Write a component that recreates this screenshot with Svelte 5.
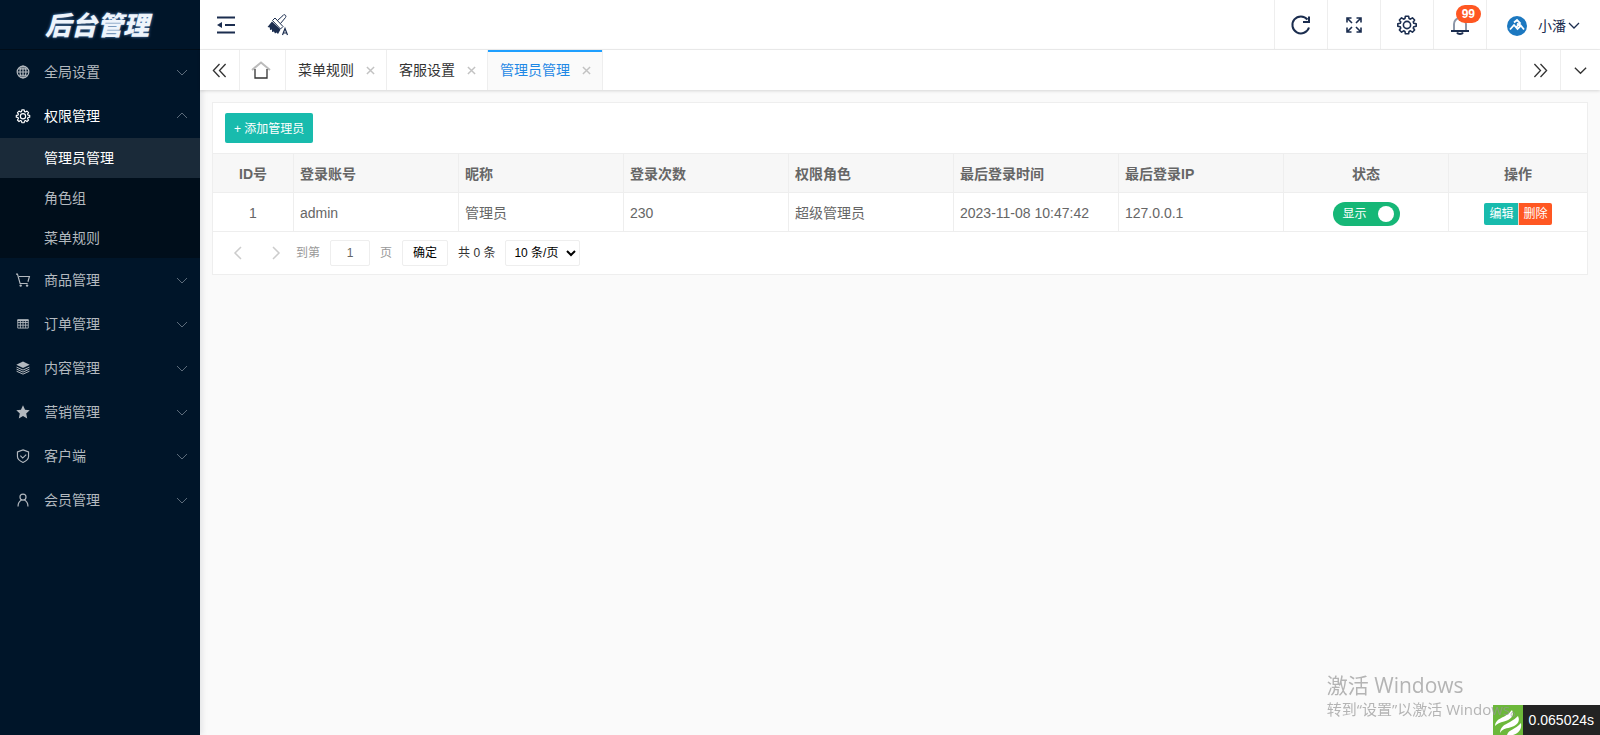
<script lang="ts">
  type MenuItem = { title: string; icon: string; open?: boolean; children?: string[] };

  const menu: MenuItem[] = [
    { title: '全局设置', icon: 'globe' },
    { title: '权限管理', icon: 'gear', open: true, children: ['管理员管理', '角色组', '菜单规则'] },
    { title: '商品管理', icon: 'cart' },
    { title: '订单管理', icon: 'table' },
    { title: '内容管理', icon: 'layers' },
    { title: '营销管理', icon: 'star' },
    { title: '客户端', icon: 'shield' },
    { title: '会员管理', icon: 'user' },
  ];

  const tabs = ['菜单规则', '客服设置', '管理员管理'];

  const admins = $state([
    { id: 1, account: 'admin', nickname: '管理员', count: 230, role: '超级管理员', time: '2023-11-08 10:47:42', ip: '127.0.0.1', show: true },
  ]);

  let activeMenu = $state('管理员管理');
  let activeTab = $state('管理员管理');
  let page = $state(1);
</script>

{#snippet gear()}
  <path d="M10 1.5h4l.6 3 1.6.7 2.6-1.7 2.7 2.7-1.7 2.6.7 1.6 3 .6v3l-3 .6-.7 1.6 1.7 2.6-2.7 2.7-2.6-1.7-1.6.7-.6 3h-4l-.6-3-1.6-.7-2.6 1.7-2.7-2.7 1.7-2.6-.7-1.6-3-.6v-3l3-.6.7-1.6-1.7-2.6 2.7-2.7 2.6 1.7 1.6-.7z" stroke-linejoin="round" />
  <circle cx="12" cy="12.5" r="4.5" />
{/snippet}

<div class="layout">
  <aside class="side">
    <h1 class="side__logo">后台管理</h1>
    <nav>
      {#each menu as item}
        <button class="menu" class:open={item.open}>
          <svg class="menu__icon" viewBox="0 0 24 24" aria-hidden="true">
            {#if item.icon === 'globe'}
              <circle cx="12" cy="12" r="10" /><ellipse cx="12" cy="12" rx="5" ry="10" />
              <path d="M12 2v20M2 12h20M4 6.5h16M4 17.5h16" />
            {:else if item.icon === 'gear'}
              {@render gear()}
            {:else if item.icon === 'cart'}
              <path d="M0 2h2.5l4.500 16h13M5 6h18l-2.500 9" />
              <circle class="solid" cx="8" cy="21.5" r="2" /><circle class="solid" cx="19" cy="21.5" r="2" />
            {:else if item.icon === 'table'}
              <path d="M3 5h18v14H3zM3 9.5h18M3 14h18M7.5 5v14M12 5v14M16.5 5v14" stroke-width="1.5" />
              <path class="solid" d="M2.500 4h19v3h-19z" />
            {:else if item.icon === 'layers'}
              <path class="solid" d="M12 1l11.5 5.5L12 12 .5 6.5z" />
              <path d="M1 10.5l11 5 11-5M1 14l11 5 11-5M1 17.5l11 5 11-5" stroke-width="1.7" />
            {:else if item.icon === 'star'}
              <path class="solid" d="M12 .5l3.500 7.500 8 1-6 5.500 1.700 8.500L12 19l-7.200 4 1.700-8.500-6-5.500 8-1z" />
            {:else if item.icon === 'shield'}
              <path d="M12 1.5l9.500 3.500v8c0 5-4.500 8-9.500 10-5-2-9.500-5-9.500-10V5zM7.500 11.500l4 4 6-6" />
            {:else}
              <circle cx="12" cy="7" r="5.2" /><path d="M3.5 23c0-6 3-9.500 6-11M20.500 23c0-6-3-9.500-6-11" />
            {/if}
          </svg>
          <span>{item.title}</span>
          <svg class="menu__arrow" viewBox="0 0 12 12" aria-hidden="true"><path d="M1 4l5 5 5-5" /></svg>
        </button>
        {#if item.open && item.children}
          <div class="sub">
            {#each item.children as child}
              <button class="sub__item" class:active={activeMenu === child} onclick={() => (activeMenu = child)}>{child}</button>
            {/each}
          </div>
        {/if}
      {/each}
    </nav>
  </aside>

  <div class="body">
    <header class="header">
      <button class="header__tool" aria-label="收起菜单">
        <svg class="fold" viewBox="0 0 20 18"><path d="M1 1.500h18M9 9h10M1 16.500h18" /><path class="solid" d="M1 9l5-3v6z" /></svg>
      </button>
      <button class="header__tool" aria-label="主题">
        <svg class="brush" viewBox="0 0 22 22">
          <path class="solid" d="M5 7.500l8.500 8-2.500 4.500-1.500-1.500-1.500 1-1-2-2 .5V15.500l-2 .5-.2-2.500-2.300-.5z" />
          <path d="M5.500 6.500L8 4l8 8.500-2.500 2.500zM10.500 6.500L16 1.500c1-2 4 0 2.500 2l-5 6" />
          <path d="M15.500 21l2.500-6.500 2.500 6.500M16.300 19h3.400" stroke-width="1.2" />
        </svg>
      </button>
      <div class="header__right">
        <button class="cell" aria-label="刷新">
          <svg viewBox="0 0 20 20"><path d="M18 12.500A8.500 8.500 0 1 1 16.500 4.500M18 1.500V7h-6" /></svg>
        </button>
        <button class="cell" aria-label="全屏">
          <svg class="full" viewBox="0 0 16 16">
            <path d="M1 5.500V1h4.500M1 1l5 5M10.500 1H15v4.500M15 1l-5 5M1 10.500V15h4.500M1 15l5-5M15 10.500V15h-4.500M15 15l-5-5" />
          </svg>
        </button>
        <button class="cell" aria-label="设置">
          <svg viewBox="0 0 24 25">{@render gear()}</svg>
        </button>
        <button class="cell" aria-label="消息">
          <svg viewBox="0 0 20 20"><path class="bell__dome" d="M4 15V9a6 6 0 0 1 12 0v6" /><path d="M1 16h18M7 17.500c1 2 5 2 6 0" /></svg>
          <span class="badge">99</span>
        </button>
        <button class="user">
          <svg class="user__avatar" viewBox="0 0 20 20">
            <circle cx="10" cy="10" r="10" fill="#1c78c0" />
            <path d="M3 13.500l4-4.500 3.500 4 3-3-3.500-2.500M7 6.500l3-2.500 3 3-3.500 4M13 8.500l4 5" fill="none" stroke="#fff" stroke-width="1.800" />
          </svg>
          <span>小潘</span>
          <svg class="user__arrow" viewBox="0 0 12 12"><path d="M1 3l5 5 5-5" /></svg>
        </button>
      </div>
    </header>

    <div class="tabs">
      <button class="tabs__ctl" aria-label="向左">
        <svg viewBox="0 0 16 16"><path d="M8 1L1.500 8 8 15M14.500 1L8 8l6.500 7" /></svg>
      </button>
      <button class="tabs__home" aria-label="首页">
        <svg viewBox="0 0 20 20"><path class="roof" d="M1 10L10 2.500l9 7.500" /><path d="M4 9v9h12V9" /></svg>
      </button>
      {#each tabs as tab}
        <div class="tab" class:active={activeTab === tab}>
          <button class="tab__name" onclick={() => (activeTab = tab)}>{tab}</button>
          <button class="tab__close" aria-label="关闭{tab}">
            <svg viewBox="0 0 10 10"><path d="M1 1l8 8M9 1L1 9" /></svg>
          </button>
        </div>
      {/each}
      <div class="tabs__end">
        <button class="tabs__ctl" aria-label="向右">
          <svg viewBox="0 0 16 16"><path d="M1.500 1L8 8l-6.500 7M8 1l6.500 7L8 15" /></svg>
        </button>
        <button class="tabs__ctl" aria-label="更多">
          <svg viewBox="0 0 16 16"><path d="M2 5l6 6 6-6" /></svg>
        </button>
      </div>
    </div>

    <main class="main">
      <section class="card">
        <div class="card__bar">
          <button class="add">+ 添加管理员</button>
        </div>
        <table class="grid">
          <colgroup>
            <col class="c-id" /><col class="c-std" /><col class="c-std" /><col class="c-std" /><col class="c-std" />
            <col class="c-std" /><col class="c-std" /><col class="c-std" /><col />
          </colgroup>
          <thead>
            <tr>
              <th class="mid">ID号</th>
              <th>登录账号</th>
              <th>昵称</th>
              <th>登录次数</th>
              <th>权限角色</th>
              <th>最后登录时间</th>
              <th>最后登录IP</th>
              <th class="mid">状态</th>
              <th class="mid">操作</th>
            </tr>
          </thead>
          <tbody>
            {#each admins as row}
              <tr>
                <td class="mid">{row.id}</td>
                <td>{row.account}</td>
                <td>{row.nickname}</td>
                <td>{row.count}</td>
                <td>{row.role}</td>
                <td>{row.time}</td>
                <td>{row.ip}</td>
                <td class="mid">
                  <label class="switch">
                    <input type="checkbox" bind:checked={row.show} />
                    <span>显示</span>
                    <i></i>
                  </label>
                </td>
                <td class="mid">
                  <div class="ops"><button class="ops__edit">编辑</button><button class="ops__del">删除</button></div>
                </td>
              </tr>
            {/each}
          </tbody>
        </table>
        <div class="pager">
          <div class="pager__navs">
            <button aria-label="上一页"><svg viewBox="0 0 12 12"><path d="M9 0L3 6l6 6" /></svg></button>
            <button aria-label="下一页"><svg viewBox="0 0 12 12"><path d="M3 0l6 6-6 6" /></svg></button>
          </div>
          <label class="pager__skip">到第 <input type="text" bind:value={page} /> 页</label>
          <button class="pager__ok">确定</button>
          <span>共 0 条</span>
          <select aria-label="每页条数">
            <option>10 条/页</option>
            <option>20 条/页</option>
            <option>50 条/页</option>
          </select>
        </div>
      </section>
    </main>
  </div>
</div>

<div class="trace">
  <svg viewBox="0 0 30 30" aria-hidden="true">
    <rect width="30" height="30" fill="#6cb83a" />
    <path d="M2 21C3 12 12 14 19 5c3 6-2 10-8 11.500-4 1-7 2-9 4.500zM7 28C8 18 16 20 25 11c3 6-2 10-8 11.500-5 1-8 2-10 5.500zM14 30c2-6 8-5 14-12 1 6-2 10-8 12z" fill="#fff" />
  </svg>
  <span>0.065024s</span>
</div>
<div class="activate">
  <p class="activate__title">激活 Windows</p>
  <p>转到“设置”以激活 Windows。</p>
</div>

<style>
  :global(body) {
    background: #fafafa;
    font: 14px/24px 'Liberation Sans', 'Noto Sans CJK SC', sans-serif;
    color: #333;
  }

  button,
  input,
  select {
    font: inherit;
    color: inherit;
    margin: 0;
    padding: 0;
    border: 0;
    background: none;
    box-sizing: border-box;
  }

  button {
    cursor: pointer;
  }

  svg {
    display: block;
    fill: none;
    stroke: currentColor;
    stroke-width: 2;
    overflow: visible;
  }

  .solid {
    fill: currentColor;
    stroke: none;
  }

  .layout {
    display: flex;
    min-height: 100vh;
  }

  .side {
    width: 200px;
    flex: none;
    background: #001529;
    color: #b3b9bf;
    box-shadow: 2px 0 6px rgba(0, 21, 41, 0.1);
  }

  .side__logo {
    margin: 0;
    height: 49px;
    padding-right: 6px;
    border-bottom: 1px solid #000d19;
    font-size: 26px;
    line-height: 52px;
    font-style: italic;
    font-weight: 900;
    text-align: center;
    color: #eef4fb;
    text-shadow: 0 0 3px #5b8cc4;
  }

  .menu {
    display: flex;
    align-items: center;
    width: 100%;
    height: 44px;
    padding: 0 12px 0 16px;
    text-align: left;
  }

  .menu.open {
    color: #fff;
  }

  .menu span {
    flex: 1;
  }

  .menu__icon {
    width: 14px;
    height: 14px;
    margin-right: 14px;
  }

  .menu__arrow {
    width: 12px;
    height: 12px;
    color: #5c6b7a;
    stroke-width: 1;
  }

  .open .menu__arrow {
    transform: rotate(180deg);
  }

  .sub {
    background: #000e1b;
  }

  .sub__item {
    display: block;
    width: 100%;
    height: 40px;
    padding-left: 44px;
    text-align: left;
  }

  .sub__item.active {
    background: #1a2a39;
    color: #fff;
  }

  .body {
    flex: 1;
    min-width: 0;
  }

  .header {
    display: flex;
    height: 49px;
    background: #fff;
    border-bottom: 1px solid #eee;
    color: #1b2d4f;
  }

  .header__tool {
    width: 52px;
    display: grid;
    place-items: center;
  }

  .fold {
    width: 20px;
    height: 18px;
  }

  .brush {
    width: 22px;
    height: 22px;
    stroke-width: 1;
  }

  .header__right {
    display: flex;
    margin-left: auto;
  }

  .cell {
    position: relative;
    width: 53px;
    display: grid;
    place-items: center;
    border-left: 1px solid #eee;
  }

  .cell svg {
    width: 20px;
    height: 20px;
  }

  .cell .full {
    width: 16px;
    height: 16px;
    stroke-width: 1.6;
  }

  .bell__dome {
    stroke: #8c96a7;
  }

  .badge {
    position: absolute;
    top: 5px;
    right: 5px;
    padding: 0 6px;
    border-radius: 9px;
    background: #ff5722;
    color: #fff;
    font-size: 12px;
    font-weight: 700;
    line-height: 18px;
  }

  .user {
    display: flex;
    align-items: center;
    padding: 2px 20px 0;
    border-left: 1px solid #eee;
  }

  .user__avatar {
    width: 20px;
    height: 20px;
    margin-right: 11px;
    stroke: none;
  }

  .user__arrow {
    width: 12px;
    height: 12px;
    margin-left: 2px;
    stroke-width: 1.3;
  }

  .tabs {
    position: relative;
    display: flex;
    height: 40px;
    background: #fff;
    box-shadow: 0 1px 3px rgba(0, 0, 0, 0.15);
  }

  .tabs__ctl,
  .tabs__home {
    width: 40px;
    display: grid;
    place-items: center;
    border-right: 1px solid #eee;
  }

  .tabs__home {
    width: 46px;
    padding-right: 3px;
  }

  .tabs__ctl svg {
    width: 15px;
    height: 15px;
    stroke-width: 1.4;
  }

  .tabs__home svg {
    width: 20px;
    height: 20px;
    stroke-width: 1.3;
  }

  .roof {
    stroke: #bbb;
    stroke-width: 2;
  }

  .tab {
    display: flex;
    align-items: center;
    padding: 0 11px 0 12px;
    border-right: 1px solid #eee;
  }

  .tab.active {
    background: #fafafa;
    box-shadow: inset 0 2px #1e9fff;
    color: #1e88e5;
  }

  .tab__close {
    margin-left: 12px;
    color: #c2c2c2;
  }

  .tab__close svg {
    width: 9px;
    height: 9px;
    stroke-width: 1.6;
  }

  .tabs__end {
    display: flex;
    margin-left: auto;
  }

  .tabs__end .tabs__ctl {
    border-right: 0;
    border-left: 1px solid #eee;
  }

  .main {
    padding: 12px;
  }

  .card {
    background: #fff;
    border: 1px solid #eee;
  }

  .card__bar {
    padding: 10px 12px;
  }

  .add {
    display: block;
    height: 30px;
    padding: 1px 9px 0;
    border-radius: 2px;
    background: #18bbad;
    color: #fff;
    font-size: 12px;
  }

  .grid {
    width: 100%;
    table-layout: fixed;
    border-collapse: separate;
    border-spacing: 0;
    border-top: 1px solid #eee;
    color: #666;
  }

  .c-id {
    width: 81px;
  }

  .c-std {
    width: 165px;
  }

  th,
  td {
    height: 36px;
    padding: 2px 6px 0;
    border-right: 1px solid #eee;
    border-bottom: 1px solid #eee;
    text-align: left;
  }

  th {
    background: #f7f7f7;
  }

  th:last-child,
  td:last-child {
    border-right: 0;
  }

  .mid {
    text-align: center;
  }

  .switch {
    display: inline-flex;
    align-items: center;
    justify-content: space-between;
    width: 67px;
    height: 24px;
    padding: 0 6px 0 10px;
    box-sizing: border-box;
    border-radius: 12px;
    background: #16b777;
    color: #fff;
    font-size: 12px;
    vertical-align: middle;
    cursor: pointer;
  }

  .switch input {
    position: absolute;
    opacity: 0;
  }

  .switch i {
    width: 16px;
    height: 16px;
    border-radius: 50%;
    background: #fff;
  }

  .ops {
    display: flex;
    justify-content: center;
    padding-top: 1px;
  }

  .ops button {
    height: 22px;
    padding: 0 4px 0 5px;
    color: #fff;
    font-size: 12px;
    line-height: 22px;
  }

  .ops__edit {
    border-radius: 2px 0 0 2px;
    background: #18bbad;
  }

  .ops .ops__del {
    border-left: 1px solid #f5d0c4;
    border-radius: 0 2px 2px 0;
    background: #ff5722;
  }

  .pager {
    display: flex;
    align-items: center;
    gap: 10px;
    height: 42px;
    padding-left: 15px;
    font-size: 12px;
  }

  .pager__navs {
    display: flex;
    gap: 18px;
    color: #ccc;
  }

  .pager__navs button {
    display: grid;
    place-items: center;
    width: 20px;
    height: 26px;
  }

  .pager__navs svg {
    width: 12px;
    height: 12px;
    stroke-width: 1.5;
  }

  .pager__skip {
    display: flex;
    align-items: center;
    gap: 10px;
    color: #999;
  }

  .pager input,
  .pager__ok,
  .pager select {
    height: 26px;
    border: 1px solid #eee;
    border-radius: 2px;
    background: #fff;
  }

  .pager input {
    width: 40px;
    text-align: center;
    color: #666;
  }

  .pager__ok {
    padding: 0 10px;
    color: #000;
  }

  .pager select {
    padding: 0 4px;
    color: #000;
  }

  .trace {
    position: fixed;
    right: 0;
    bottom: 0;
    display: flex;
    height: 30px;
    color: #fff;
    line-height: 30px;
  }

  .trace svg {
    width: 30px;
    height: 30px;
    stroke: none;
  }

  .trace span {
    padding: 0 6px;
    background: #232323;
  }

  .activate {
    position: fixed;
    right: 75px;
    bottom: 14px;
    color: rgba(150, 150, 150, 0.7);
    font-family: 'Open Sans', 'Noto Sans CJK SC', sans-serif;
    font-size: 15px;
    pointer-events: none;
  }

  .activate p {
    margin: 0;
  }

  .activate__title {
    font-size: 21px;
  }
</style>
